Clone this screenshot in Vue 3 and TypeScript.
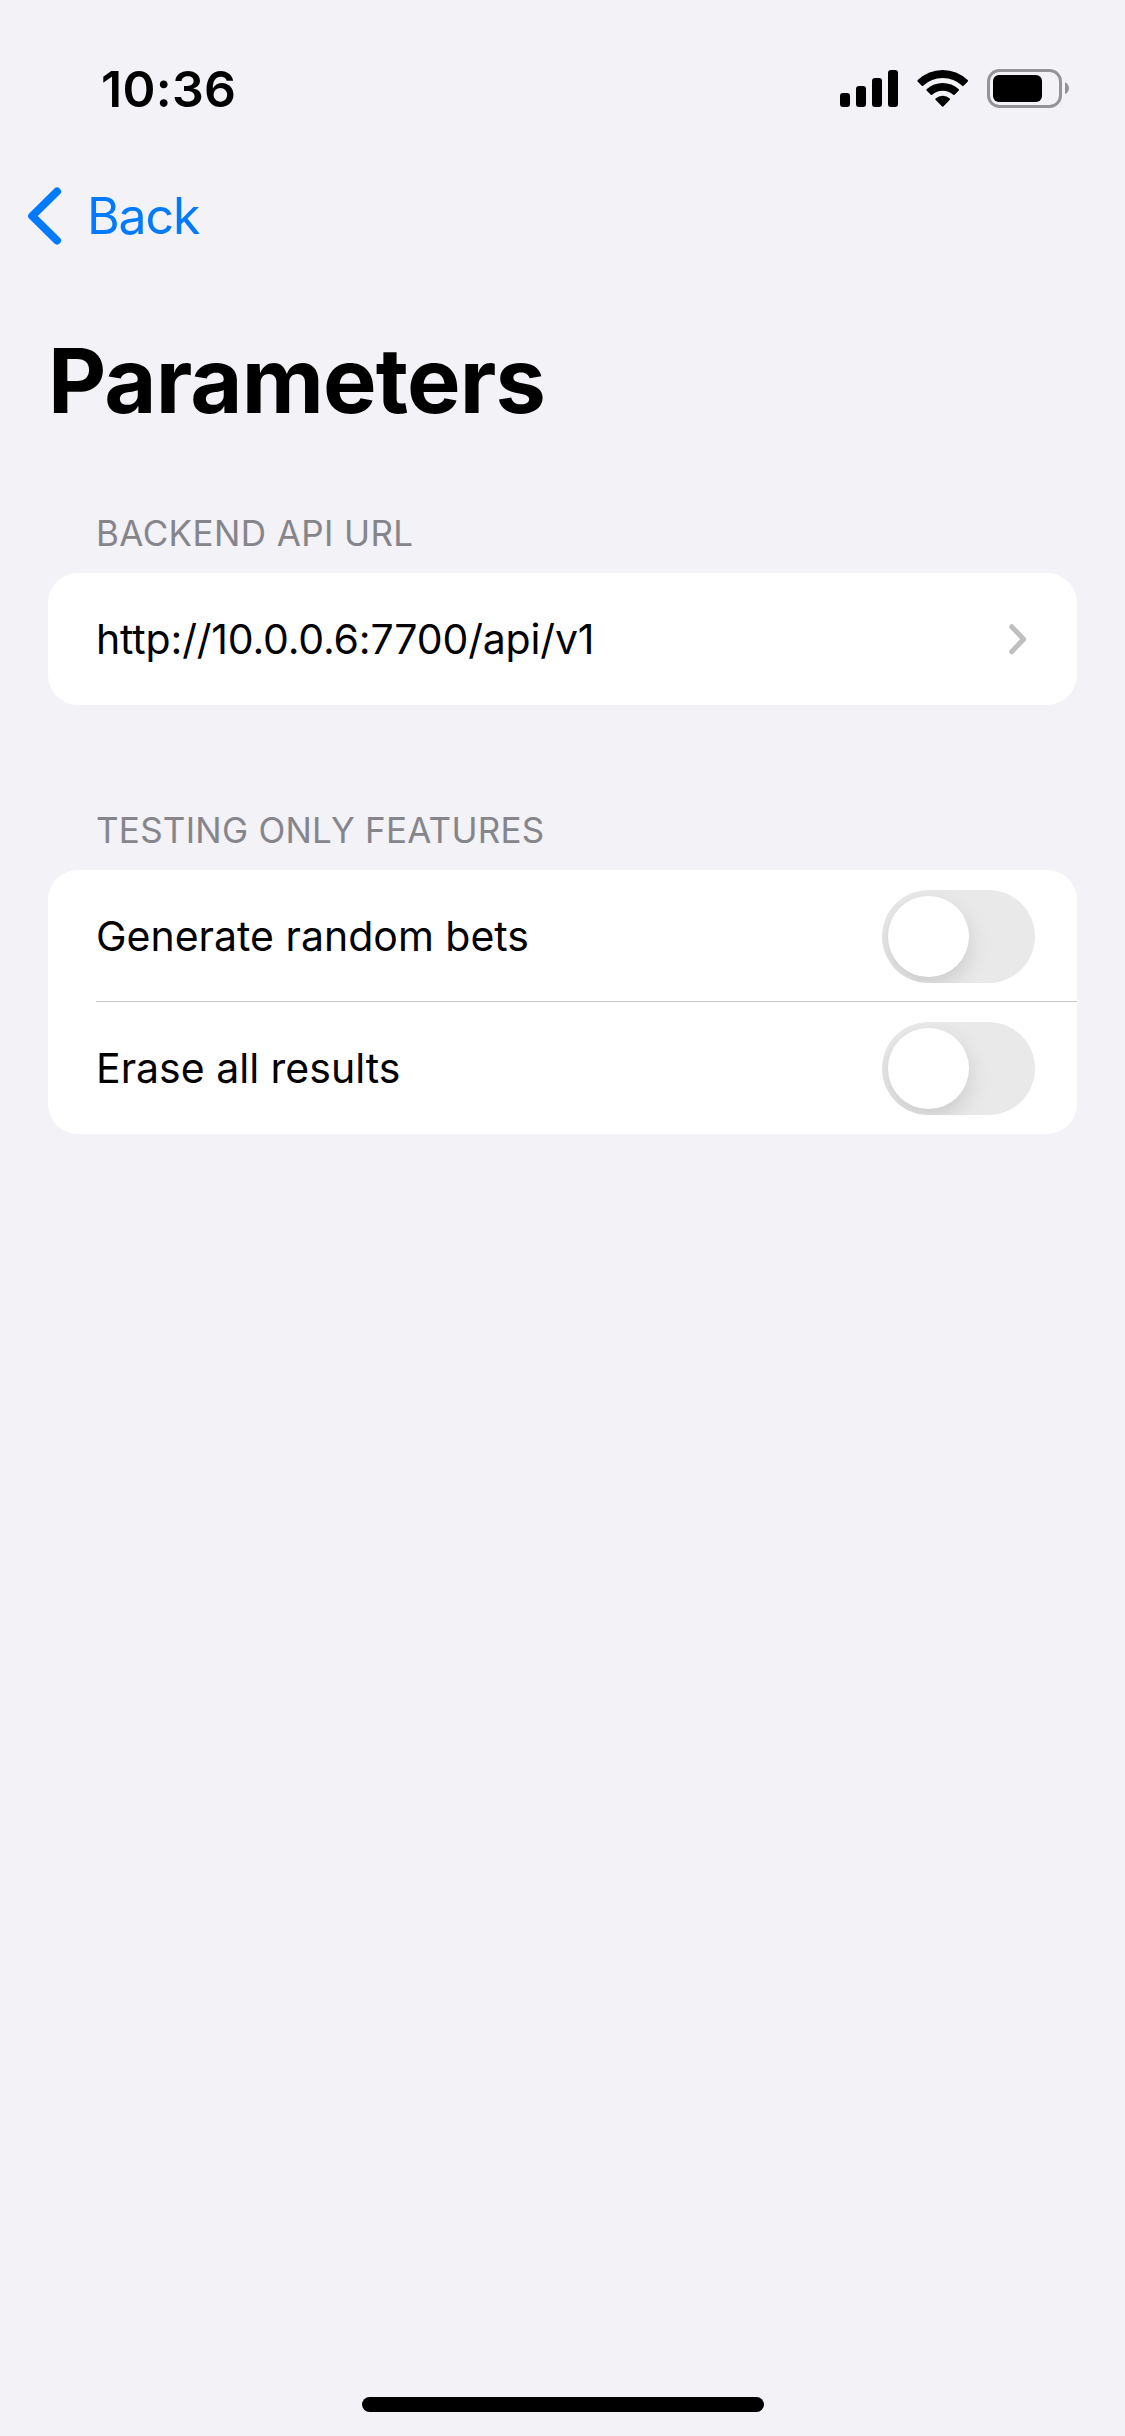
<script setup lang="ts">
import { reactive } from 'vue'

interface Feature {
  id: string
  label: string
  enabled: boolean
}

const backendUrl = 'http://10.0.0.6:7700/api/v1'

const features = reactive<Feature[]>([
  { id: 'generate', label: 'Generate random bets', enabled: false },
  { id: 'erase', label: 'Erase all results', enabled: false },
])
</script>

<template>
  <div class="screen">
    <header class="status-bar">
      <span class="time">10:36</span>
      <div class="indicators">
        <svg class="cellular" width="58" height="38" viewBox="0 0 58 38">
          <rect x="0" y="23" width="10" height="14" rx="3" />
          <rect x="16" y="16" width="10" height="21" rx="3" />
          <rect x="32" y="8" width="10" height="29" rx="3" />
          <rect x="48" y="0" width="10" height="37" rx="3" />
        </svg>
        <svg class="wifi" width="52" height="38" viewBox="0 0 52 38">
          <path d="M.6 11.4Q0 10.7.7 10.1Q11.6 0 25.7 0Q39.800 0 50.700 10.100Q51.400 10.700 50.800 11.400L46.600 15.700Q46 16.300 45.300 15.700Q37 8 25.700 8Q14.400 8 6.100 15.700Q5.400 16.300 4.800 15.700Z" />
          <path d="M9.600 20.500Q9 19.900 9.600 19.300Q16.500 12.900 25.700 12.900Q34.900 12.900 41.800 19.300Q42.400 19.900 41.800 20.500L37.600 24.700Q37 25.300 36.300 24.700Q31.600 20.700 25.700 20.700Q19.800 20.700 15.100 24.700Q14.400 25.300 13.800 24.700Z" />
          <path d="M18.500 29.700Q17.900 29 18.600 28.500Q21.700 25.700 25.700 25.700Q29.700 25.700 32.800 28.500Q33.500 29 32.900 29.700L26.300 36.500Q25.700 37.100 25.100 36.500Z" />
        </svg>
        <svg class="battery" width="83" height="39" viewBox="0 0 83 39">
          <rect x="1.500" y="1.500" width="72" height="36" rx="11" fill="none" stroke="#949397" stroke-width="3" />
          <rect x="6" y="6" width="49" height="27" rx="6" />
          <path d="M78 13.300C80.500 14.400 82 16.600 82 19.200C82 21.800 80.500 24 78 25.100Z" fill="#949397" />
        </svg>
      </div>
    </header>

    <nav class="nav-bar">
      <a class="back">
        <svg width="34" height="58" viewBox="0 0 34 58">
          <path d="M29 4.500L4.200 29L29 53.500" fill="none" stroke="#007aff" stroke-width="8" stroke-linecap="round" stroke-linejoin="round" />
        </svg>
        <span class="back-label">Back</span>
      </a>
    </nav>

    <h1 class="title">Parameters</h1>

    <main class="groups">
      <section>
        <h2 class="group-title backend-title">BACKEND API URL</h2>
        <div class="card">
          <div class="row link-row">
            <span class="url">{{ backendUrl }}</span>
            <svg width="18" height="31" viewBox="0 0 18 31">
              <path d="M2.700 2.700L14.600 15.200L2.700 27.700" fill="none" stroke="#bfbfc0" stroke-width="5" stroke-linecap="round" stroke-linejoin="round" />
            </svg>
          </div>
        </div>
      </section>

      <section>
        <h2 class="group-title">TESTING ONLY FEATURES</h2>
        <div class="card">
          <div v-for="f in features" :key="f.id" class="row toggle-row">
            <span class="label">{{ f.label }}</span>
            <button
              class="switch"
              :class="{ on: f.enabled }"
              role="switch"
              :aria-checked="f.enabled"
              @click="f.enabled = !f.enabled"
            >
              <span class="knob"></span>
            </button>
          </div>
        </div>
      </section>
    </main>

    <footer class="home"><div class="home-indicator"></div></footer>
  </div>
</template>

<style>
body {
  margin: 0;
  background: #f2f2f7;
}
</style>

<style scoped>
.screen {
  display: flex;
  flex-direction: column;
  box-sizing: border-box;
  width: 1125px;
  height: 2436px;
  overflow: hidden;
  background: #f2f2f7;
  color: #000;
  font-family: Inter, "Liberation Sans", sans-serif;
}

.status-bar {
  display: flex;
  justify-content: space-between;
  align-items: flex-start;
  box-sizing: border-box;
  height: 150px;
  padding: 59px 55px 0 101px;
}

.time {
  font-size: 50px;
  font-weight: 600;
  line-height: 60px;
  letter-spacing: 0.3px;
}

.indicators {
  display: flex;
  align-items: flex-start;
  padding-top: 10px;
}

.indicators svg {
  display: block;
}

.cellular {
  margin-top: 1px;
}

.wifi {
  margin: 1px 18px 0 19px;
}

.nav-bar {
  display: flex;
  align-items: center;
  height: 131px;
  padding-left: 28px;
}

.back {
  display: flex;
  align-items: center;
  gap: 25px;
  color: #007aff;
}

.back-label {
  font-size: 50px;
  line-height: 60px;
  letter-spacing: -1.1px;
}

.title {
  margin: 45px 0 0 48px;
  font-size: 90px;
  font-weight: 700;
  line-height: 110px;
  letter-spacing: -0.85px;
}

.groups {
  display: flex;
  flex-direction: column;
  gap: 103px;
  padding: 75px 48px 0;
}

.group-title {
  margin: 0 0 18px 48px;
  color: #86858b;
  font-size: 35px;
  font-weight: 400;
  line-height: 44px;
  letter-spacing: 0.25px;
}

.backend-title {
  letter-spacing: 0.4px;
}

.card {
  overflow: hidden;
  border-radius: 30px;
  background: #fff;
}

.row {
  display: flex;
  align-items: center;
  justify-content: space-between;
  height: 132px;
  margin-left: 48px;
  font-size: 41px;
  line-height: 50px;
}

.link-row {
  padding-right: 50px;
}

.url {
  letter-spacing: -0.17px;
}

.toggle-row {
  box-sizing: border-box;
  padding-right: 42px;
}

.toggle-row:not(:last-child) {
  box-shadow: inset 0 -1px #c6c6c8;
}

.switch {
  display: flex;
  align-items: center;
  box-sizing: border-box;
  width: 153px;
  height: 93px;
  margin: 1px 0 0;
  padding: 6px;
  overflow: hidden;
  border: 0;
  border-radius: 47px;
  background: #e9e9ea;
}

.switch.on {
  justify-content: flex-end;
  background: #34c759;
}

.knob {
  width: 81px;
  height: 81px;
  border-radius: 50%;
  background: #fff;
  box-shadow: 0 9px 22px rgba(0, 0, 0, 0.13);
}

.home {
  display: flex;
  justify-content: center;
  margin-top: auto;
  padding: 0 0 24px 1px;
}

.home-indicator {
  width: 402px;
  height: 15px;
  border-radius: 8px;
  background: #000;
}
</style>
